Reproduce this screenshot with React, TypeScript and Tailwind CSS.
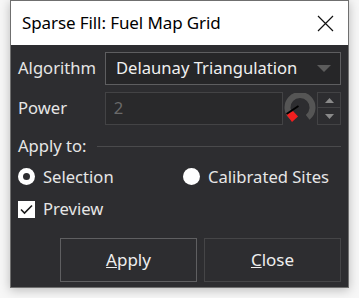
import React from "react";

const font = { fontFamily: '"Noto Sans", "Open Sans", sans-serif' };

function Knob() {
  const cx = 16, cy = 14.5, r = 12.5;
  const pt = (a: number, rr: number) => {
    const rad = (a * Math.PI) / 180;
    return `${(cx + rr * Math.cos(rad)).toFixed(2)},${(cy + rr * Math.sin(rad)).toFixed(2)}`;
  };
  return (
    <svg width="32" height="32" viewBox="0 0 32 32">
      <path d={`M${pt(128, r)} A${r} ${r} 0 1 1 ${pt(52, r)}`} fill="none" stroke="#555555" strokeWidth="6" />
      <polygon points="2.5,21.5 9,18 14,23.5 8,29" fill="#f21f1f" />
      <line x1="14.5" y1="13" x2="2.5" y2="21" stroke="#000" strokeWidth="1.7" />
    </svg>
  );
}

export default function App() {
  return (
    <div className="w-[359px] h-[298px] bg-[#f7f7f7] overflow-hidden" style={font}>
      <div className="ml-[10px] w-[339px] h-[288px] border border-[#6f6f6f] flex flex-col shadow-[0_2px_10px_rgba(0,0,0,0.25)]">
        <div className="h-[44px] bg-white flex items-center justify-between pl-[11px] pr-[14px]">
          <span className="text-[17px] text-black tracking-[-0.1px]">Sparse Fill: Fuel Map Grid</span>
          <svg width="17" height="17" viewBox="0 0 17 17">
            <path d="M1 1 L16 16 M16 1 L1 16" stroke="#111" strokeWidth="1.2" />
          </svg>
        </div>
        <div className="flex-1 bg-[#2d2d30] text-[#e6e6e6] text-[16.6px] flex flex-col pl-[7px] pr-[7px]">
          <div className="mt-[7px] h-[33px] flex items-center">
            <span className="w-[87px]">Algorithm</span>
            <div className="flex-1 h-[33px] border border-[#5e5e60] bg-[#262628] flex items-center justify-between pl-[10px] pr-[9px]">
              <span className="text-[#f0f0f0]">Delaunay Triangulation</span>
              <svg width="14" height="8" viewBox="0 0 14 8"><polygon points="0,0 14,0 7,7" fill="#5c5c5c" /></svg>
            </div>
          </div>
          <div className="mt-[7px] h-[33px] flex items-center">
            <span className="w-[87px]">Power</span>
            <div className="w-[179px] h-[33px] border border-[#434345] bg-[#29292b] flex items-center pl-[8px] text-[#6a6a6a]">2</div>
            <div className="ml-[1px] w-[32px] h-[32px]"><Knob /></div>
            <div className="ml-[1px] flex flex-col w-[24px]">
              <div className="h-[16px] border border-[#434345] flex items-center justify-center">
                <svg width="9" height="5" viewBox="0 0 9 5"><polygon points="0,5 9,5 4.5,0" fill="#8a8a8a" /></svg>
              </div>
              <div className="h-[17px] border border-t-0 border-[#434345] flex items-center justify-center">
                <svg width="9" height="5" viewBox="0 0 9 5"><polygon points="0,0 9,0 4.5,5" fill="#8a8a8a" /></svg>
              </div>
            </div>
          </div>
          <div className="mt-[9px] h-[24px] flex items-center">
            <span>Apply to:</span>
            <div className="flex-1 ml-[10px] h-px bg-[#4a4a4c]" />
          </div>
          <div className="mt-[6px] h-[26px] flex items-center">
            <div className="w-[165px] flex items-center">
              <span className="w-[17px] h-[17px] rounded-full bg-white flex items-center justify-center">
                <span className="w-[7px] h-[7px] rounded-full bg-[#2d2d30]" />
              </span>
              <span className="ml-[8px]">Selection</span>
            </div>
            <div className="flex items-center">
              <span className="w-[17px] h-[17px] rounded-full bg-white" />
              <span className="ml-[8px]">Calibrated Sites</span>
            </div>
          </div>
          <div className="mt-[6px] h-[26px] flex items-center">
            <span className="w-[17px] h-[17px] bg-white flex items-center justify-center">
              <svg width="13" height="11" viewBox="0 0 13 11"><path d="M1 5.5 L4.5 9 L12 1.5" fill="none" stroke="#1a1a1a" strokeWidth="1.6" /></svg>
            </span>
            <span className="ml-[8px]">Preview</span>
          </div>
          <div className="mt-[16px] flex justify-end gap-[7px]">
            <button className="w-[137px] h-[44px] border border-[#5f5f61] bg-[#2d2d30] text-[#eeeeee] text-[17px]"><u>A</u>pply</button>
            <button className="w-[137px] h-[44px] border border-[#454547] bg-[#2d2d30] text-[#eeeeee] text-[17px]"><u>C</u>lose</button>
          </div>
        </div>
      </div>
    </div>
  );
}
